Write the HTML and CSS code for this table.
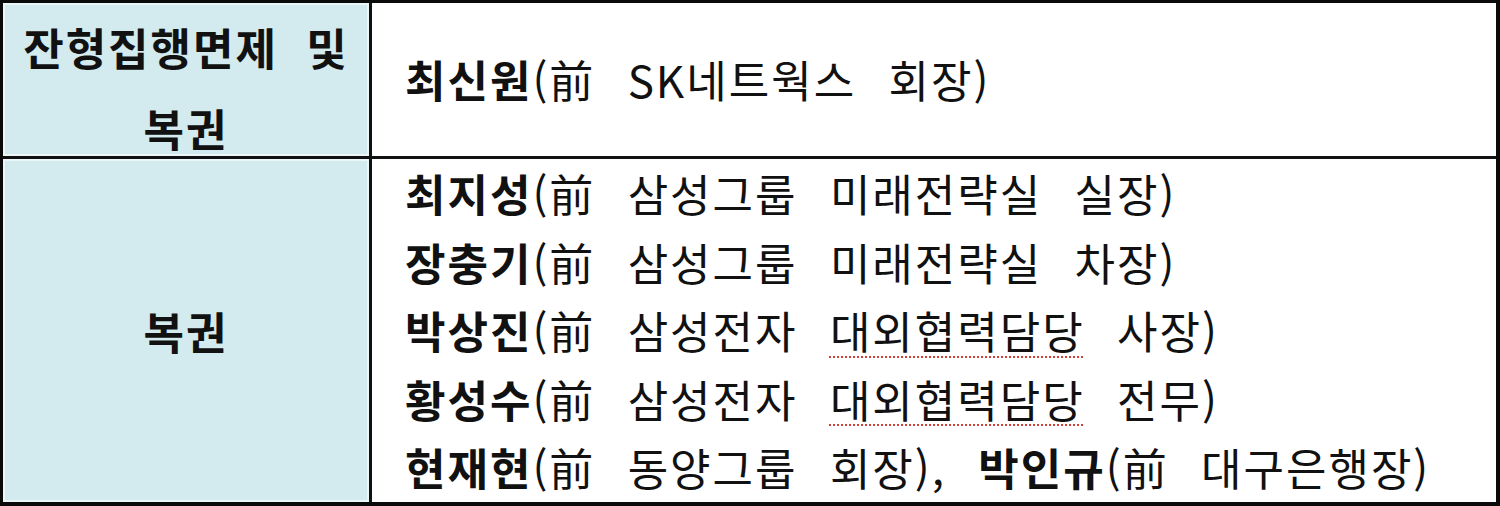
FILE: index.html
```html
<!DOCTYPE html>
<html lang="ko">
<head>
<meta charset="utf-8">
<link rel="stylesheet" href="styles.css">
</head>
<body>
<div class="table">
  <div class="head head-top">
    <div class="head-line">잔형집행면제 및</div>
    <div class="head-line head-line-second">복권</div>
  </div>
  <div class="body body-top">
    <div class="line"><b>최신원</b>(前 SK네트웍스 회장)</div>
  </div>
  <div class="head head-bottom">복권</div>
  <div class="body body-bottom">
    <div class="line"><b>최지성</b>(前 삼성그룹 미래전략실 실장)</div>
    <div class="line"><b>장충기</b>(前 삼성그룹 미래전략실 차장)</div>
    <div class="line"><b>박상진</b>(前 삼성전자 <span class="spell">대외협력담당</span> 사장)</div>
    <div class="line"><b>황성수</b>(前 삼성전자 <span class="spell">대외협력담당</span> 전무)</div>
    <div class="line"><b>현재현</b>(前 동양그룹 회장), <b>박인규</b>(前 대구은행장)</div>
  </div>
</div>
</body>
</html>
```

FILE: styles.css
```css
html, body {
  margin: 0;
  padding: 0;
  background: #fff;
}

.table {
  box-sizing: border-box;
  width: 1500px;
  height: 506px;
  border-style: solid;
  border-color: #0a0a0a;
  border-width: 3px 4px 4px 3px;
  background: #111;
  display: grid;
  grid-template-columns: 366px 1fr;
  grid-template-rows: 153px 1fr;
  gap: 3px;
  font-family: "Noto Sans CJK KR", "Malgun Gothic", sans-serif;
  color: #111;
  font-size: 44px;
  letter-spacing: 2px;
}

.head {
  background: #d3eaee;
  box-shadow: inset 0 0 0 2px #eaf6f8;
  font-weight: 700;
  text-align: center;
  word-spacing: 14px;
}

.head-top {
  display: flex;
  flex-direction: column;
  padding-top: 18px;
}

.head-line {
  line-height: 52px;
  white-space: nowrap;
}

.head-line-second {
  margin-top: 29px;
}

.head-bottom {
  display: flex;
  align-items: center;
  justify-content: center;
}

.body {
  background: #fff;
  padding-left: 33px;
  display: flex;
  flex-direction: column;
  justify-content: center;
  word-spacing: 18px;
}

.line {
  line-height: 68.6px;
  white-space: nowrap;
}

.line b {
  font-weight: 700;
}

.spell {
  text-decoration: underline dotted #d0403a;
  text-decoration-thickness: 2px;
  text-underline-offset: 7px;
}
```
